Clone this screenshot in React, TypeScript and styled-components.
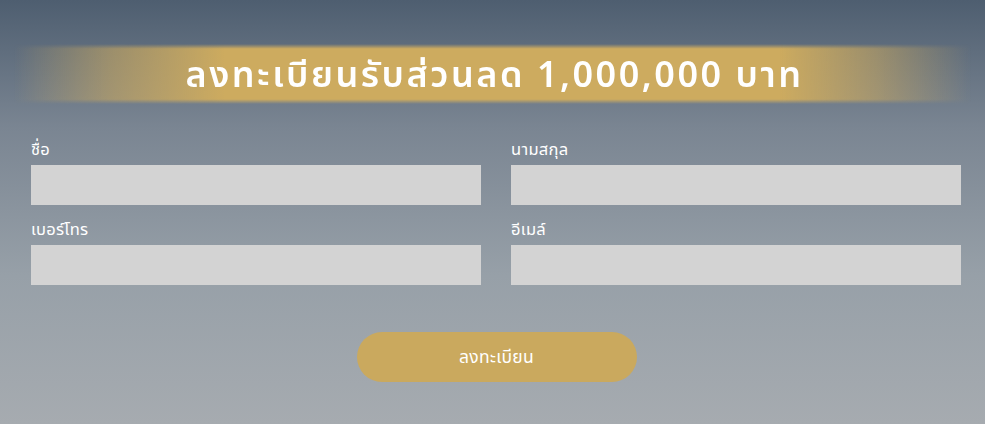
import React from "react";
import styled, { createGlobalStyle } from "styled-components";

const Global = createGlobalStyle`
  html, body { margin: 0; padding: 0; }
  body {
    font-family: "Noto Sans", "Noto Sans Thai", "Liberation Sans", sans-serif;
    width: 985px;
    height: 424px;
    overflow: hidden;
  }
`;

const Page = styled.div`
  width: 985px;
  height: 424px;
  box-sizing: border-box;
  background: linear-gradient(180deg, #4e5e70 0%, #7a8592 30%, #97a0a8 65%, #a6abb0 100%);
  padding-top: 44px;
  display: flex;
  flex-direction: column;
`;

const Banner = styled.div`
  height: 60px;
  margin: 0 14px;
  display: flex;
  align-items: center;
  justify-content: center;
  background: linear-gradient(
    90deg,
    rgba(205, 170, 94, 0) 0%,
    rgba(205, 170, 94, 0.55) 10%,
    #cdab5f 22%,
    #cdab5f 80%,
    rgba(205, 170, 94, 0.55) 90%,
    rgba(205, 170, 94, 0) 100%
  );
  -webkit-mask-image: linear-gradient(180deg, transparent 0%, #000 8%, #000 92%, transparent 100%);
  mask-image: linear-gradient(180deg, transparent 0%, #000 8%, #000 92%, transparent 100%);
`;

const Title = styled.h1`
  margin: 0;
  color: #ffffff;
  font-size: 36px;
  font-weight: 600;
  letter-spacing: 2.5px;
  line-height: 1;
  padding-left: 4px;
`;

const Form = styled.div`
  display: grid;
  grid-template-columns: 450px 450px;
  column-gap: 30px;
  row-gap: 12px;
  padding: 33px 0 0 31px;
`;

const Field = styled.div`
  display: flex;
  flex-direction: column;
`;

const Label = styled.label`
  color: #ffffff;
  font-size: 16.5px;
  letter-spacing: 0.3px;
  line-height: 24px;
  height: 24px;
  margin-bottom: 4px;
`;

const Input = styled.div`
  height: 40px;
  background: #d3d3d3;
`;

const Actions = styled.div`
  display: flex;
  justify-content: center;
  padding-top: 47px;
  padding-left: 8px;
`;

const Button = styled.button`
  width: 280px;
  height: 50px;
  border: none;
  border-radius: 25px;
  background: #caa95e;
  color: #ffffff;
  font-family: inherit;
  font-size: 17.5px;
  letter-spacing: 0.3px;
  cursor: pointer;
`;

const fields = ["ชื่อ", "นามสกุล", "เบอร์โทร", "อีเมล์"];

export default function App() {
  return (
    <>
      <Global />
      <Page>
        <Banner>
          <Title>ลงทะเบียนรับส่วนลด 1,000,000 บาท</Title>
        </Banner>
        <Form>
          {fields.map((f) => (
            <Field key={f}>
              <Label>{f}</Label>
              <Input />
            </Field>
          ))}
        </Form>
        <Actions>
          <Button>ลงทะเบียน</Button>
        </Actions>
      </Page>
    </>
  );
}
